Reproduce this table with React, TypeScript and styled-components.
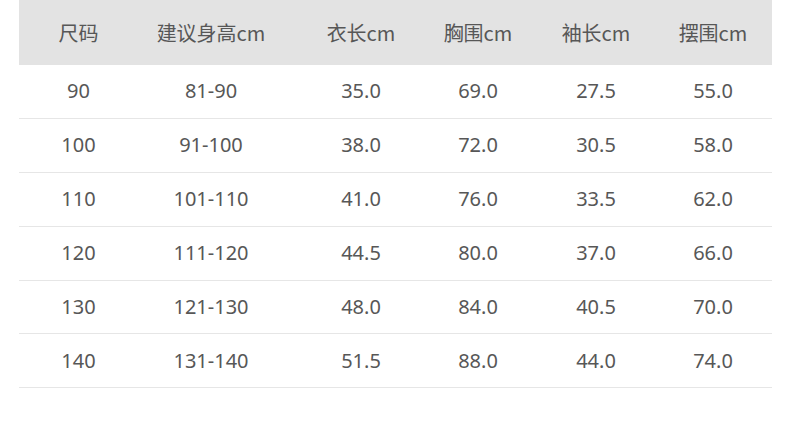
import React from "react";
import styled, { createGlobalStyle } from "styled-components";

const Global = createGlobalStyle`
  html, body { margin: 0; padding: 0; background: #ffffff; }
  body { font-family: "Noto Sans", "Noto Sans CJK SC", sans-serif; }
`;

const Page = styled.div`
  width: 790px;
  height: 431px;
  padding: 0 18px 0 19px;
  box-sizing: border-box;
  background: #fff;
`;

const Table = styled.div`
  display: flex;
  flex-direction: column;
`;

const Row = styled.div<{ $header?: boolean }>`
  display: grid;
  grid-template-columns: 119px 146px 154px 80px 156px 78px;
  align-items: center;
  height: ${(p) => (p.$header ? "65px" : "53.9px")};
  background: ${(p) => (p.$header ? "#e3e3e3" : "transparent")};
  border-bottom: ${(p) => (p.$header ? "none" : "1px solid #e6e6e6")};
  box-sizing: border-box;
`;

const Cell = styled.div`
  text-align: center;
  white-space: nowrap;
  font-size: 20px;
  color: #575757;
  line-height: 1;
  font-family: "Noto Sans", "Noto Sans CJK SC", sans-serif;
`;

const HeadCell = styled(Cell)`
  font-family: "Noto Sans CJK SC", "Noto Sans", sans-serif;
  font-size: 20px;
`;

const headers = ["尺码", "建议身高cm", "衣长cm", "胸围cm", "袖长cm", "摆围cm"];
const rows = [
  ["90", "81-90", "35.0", "69.0", "27.5", "55.0"],
  ["100", "91-100", "38.0", "72.0", "30.5", "58.0"],
  ["110", "101-110", "41.0", "76.0", "33.5", "62.0"],
  ["120", "111-120", "44.5", "80.0", "37.0", "66.0"],
  ["130", "121-130", "48.0", "84.0", "40.5", "70.0"],
  ["140", "131-140", "51.5", "88.0", "44.0", "74.0"],
];

export default function App() {
  return (
    <>
      <Global />
      <Page>
        <Table>
          <Row $header>
            {headers.map((h) => (
              <HeadCell key={h}>{h}</HeadCell>
            ))}
          </Row>
          {rows.map((r, i) => (
            <Row key={i}>
              {r.map((c, j) => (
                <Cell key={j}>{c}</Cell>
              ))}
            </Row>
          ))}
        </Table>
      </Page>
    </>
  );
}
